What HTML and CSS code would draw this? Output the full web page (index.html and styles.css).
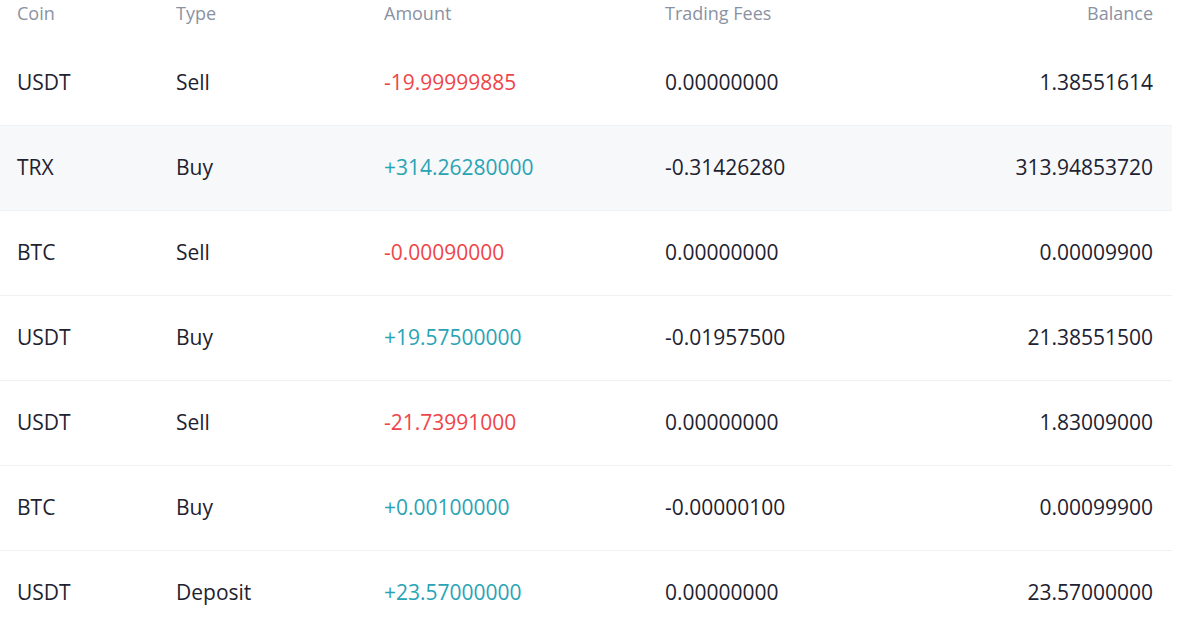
FILE: index.html
```html
<!DOCTYPE html>
<html>
<head>
<meta charset="utf-8">
<link rel="stylesheet" href="styles.css">
</head>
<body>
<div class="table">
  <div class="row head">
    <div>Coin</div><div>Type</div><div>Amount</div><div>Trading Fees</div><div class="r">Balance</div>
  </div>
  <div class="row"><div>USDT</div><div>Sell</div><div class="neg">-19.99999885</div><div>0.00000000</div><div class="r">1.38551614</div></div>
  <div class="row alt"><div>TRX</div><div>Buy</div><div class="pos">+314.26280000</div><div>-0.31426280</div><div class="r">313.94853720</div></div>
  <div class="row"><div>BTC</div><div>Sell</div><div class="neg">-0.00090000</div><div>0.00000000</div><div class="r">0.00009900</div></div>
  <div class="row"><div>USDT</div><div>Buy</div><div class="pos">+19.57500000</div><div>-0.01957500</div><div class="r">21.38551500</div></div>
  <div class="row"><div>USDT</div><div>Sell</div><div class="neg">-21.73991000</div><div>0.00000000</div><div class="r">1.83009000</div></div>
  <div class="row"><div>BTC</div><div>Buy</div><div class="pos">+0.00100000</div><div>-0.00000100</div><div class="r">0.00099900</div></div>
  <div class="row"><div>USDT</div><div>Deposit</div><div class="pos">+23.57000000</div><div>0.00000000</div><div class="r">23.57000000</div></div>
</div>
</body>
</html>
```
FILE: styles.css
```css
html, body {
  margin: 0;
  padding: 0;
  background: #ffffff;
}
body {
  font-family: "Open Sans", "Noto Sans", sans-serif;
  color: #1e2230;
}
.table {
  width: 1172px;
}
.row {
  display: grid;
  grid-template-columns: 159px 208px 281px 1fr 240px;
  align-items: center;
  height: 84px;
  box-sizing: content-box;
  padding: 0 19px 0 17px;
  font-size: 21px;
  line-height: 28px;
  border-bottom: 1px solid #eff1f4;
}
.row:not(.head) {
  height: 82px;
  padding-bottom: 2px;
}
.row.head {
  height: 41px;
  align-items: start;
  font-size: 18px;
  line-height: 26px;
  color: #8a92a2;
  border-bottom: none;
}
.row.alt {
  background: #f7f8fa;
}
.r {
  text-align: right;
}
.neg {
  color: #ef454a;
}
.pos {
  color: #2aa3b5;
}
```
